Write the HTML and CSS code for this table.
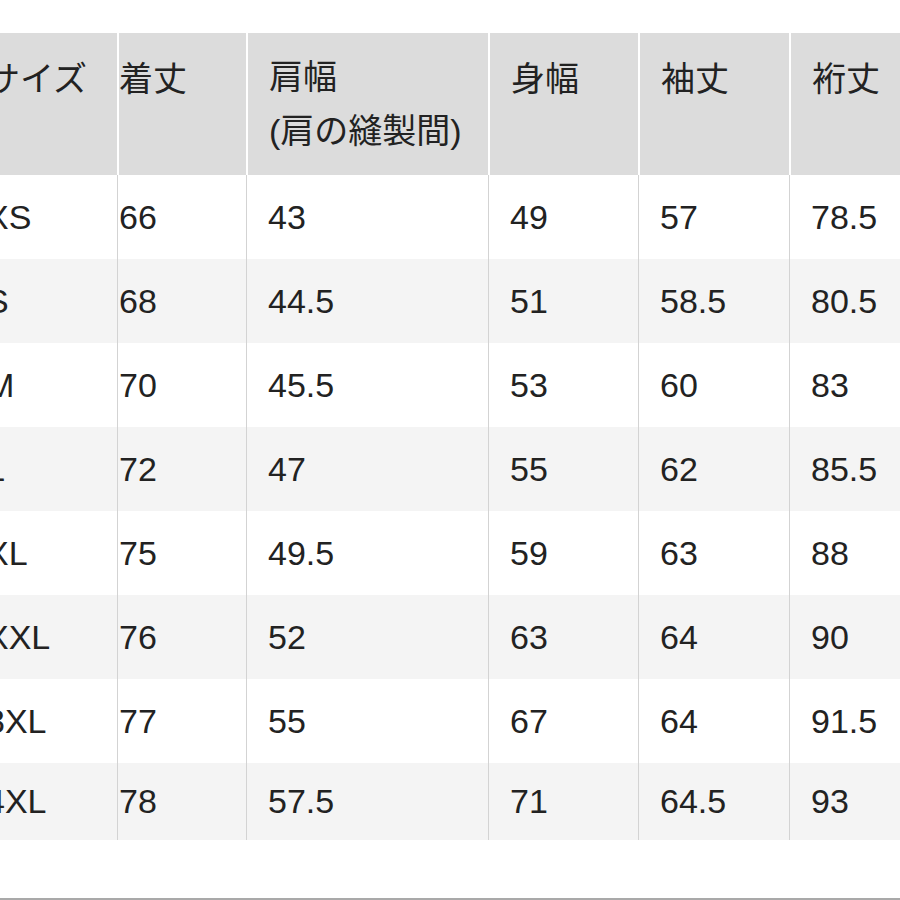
FILE: index.html
```html
<!DOCTYPE html>
<html lang="ja">
<head>
<meta charset="utf-8">
<link rel="stylesheet" href="styles.css">
</head>
<body>
<div class="page">
  <div class="table">
    <div class="row head">
      <div class="cell c1">サイズ</div>
      <div class="cell c2">着丈</div>
      <div class="cell c3">肩幅<br>(肩の縫製間)</div>
      <div class="cell c4">身幅</div>
      <div class="cell c5">袖丈</div>
      <div class="cell c6">裄丈</div>
    </div>
    <div class="row">
      <div class="cell c1">XS</div><div class="cell c2">66</div><div class="cell c3">43</div><div class="cell c4">49</div><div class="cell c5">57</div><div class="cell c6">78.5</div>
    </div>
    <div class="row alt">
      <div class="cell c1">S</div><div class="cell c2">68</div><div class="cell c3">44.5</div><div class="cell c4">51</div><div class="cell c5">58.5</div><div class="cell c6">80.5</div>
    </div>
    <div class="row">
      <div class="cell c1">M</div><div class="cell c2">70</div><div class="cell c3">45.5</div><div class="cell c4">53</div><div class="cell c5">60</div><div class="cell c6">83</div>
    </div>
    <div class="row alt">
      <div class="cell c1">L</div><div class="cell c2">72</div><div class="cell c3">47</div><div class="cell c4">55</div><div class="cell c5">62</div><div class="cell c6">85.5</div>
    </div>
    <div class="row">
      <div class="cell c1">XL</div><div class="cell c2">75</div><div class="cell c3">49.5</div><div class="cell c4">59</div><div class="cell c5">63</div><div class="cell c6">88</div>
    </div>
    <div class="row alt">
      <div class="cell c1">XXL</div><div class="cell c2">76</div><div class="cell c3">52</div><div class="cell c4">63</div><div class="cell c5">64</div><div class="cell c6">90</div>
    </div>
    <div class="row">
      <div class="cell c1">3XL</div><div class="cell c2">77</div><div class="cell c3">55</div><div class="cell c4">67</div><div class="cell c5">64</div><div class="cell c6">91.5</div>
    </div>
    <div class="row alt last">
      <div class="cell c1">4XL</div><div class="cell c2">78</div><div class="cell c3">57.5</div><div class="cell c4">71</div><div class="cell c5">64.5</div><div class="cell c6">93</div>
    </div>
  </div>
  <div class="bottom-line"></div>
</div>
</body>
</html>
```

FILE: styles.css
```css
html, body {
  margin: 0;
  padding: 0;
  background: #ffffff;
}

.page {
  width: 900px;
  height: 900px;
  overflow: hidden;
  display: flex;
  flex-direction: column;
  font-family: "Liberation Sans", "Noto Sans CJK JP", sans-serif;
  color: #222222;
}

.table {
  margin-top: 33px;
  margin-left: -36px;
  display: flex;
  flex-direction: column;
}

.row {
  display: grid;
  grid-template-columns: 153px 129px 242px 150px 151px 151px;
  height: 84px;
  font-size: 34px;
  background: #ffffff;
}

.row.alt {
  background: #f4f4f4;
}

.row.last {
  height: 77px;
}

.row.head {
  height: 142px;
  background: #ffffff;
}

.cell {
  box-sizing: border-box;
  display: flex;
  align-items: center;
  padding-left: 21px;
  border-left: 1px solid #d3d3d3;
  white-space: nowrap;
}

.cell.c1 {
  border-left: none;
  padding-left: 22px;
}

.cell.c2 {
  padding-left: 1px;
}

.head .cell {
  background: #dcdcdc;
  border-left: 2px solid #ffffff;
  align-items: flex-start;
  padding-top: 17px;
  line-height: 54px;
  font-family: "Noto Sans CJK JP", "Liberation Sans", sans-serif;
}

.head .cell.c1 {
  border-left: none;
  padding-left: 22px;
}

.head .cell.c2 {
  padding-left: 0;
}

.head .cell.c3 {
  display: block;
  font-family: "Liberation Sans", "Noto Sans CJK JP", sans-serif;
}

.bottom-line {
  margin-top: auto;
  height: 2px;
  background: #a9a9a9;
}
```
